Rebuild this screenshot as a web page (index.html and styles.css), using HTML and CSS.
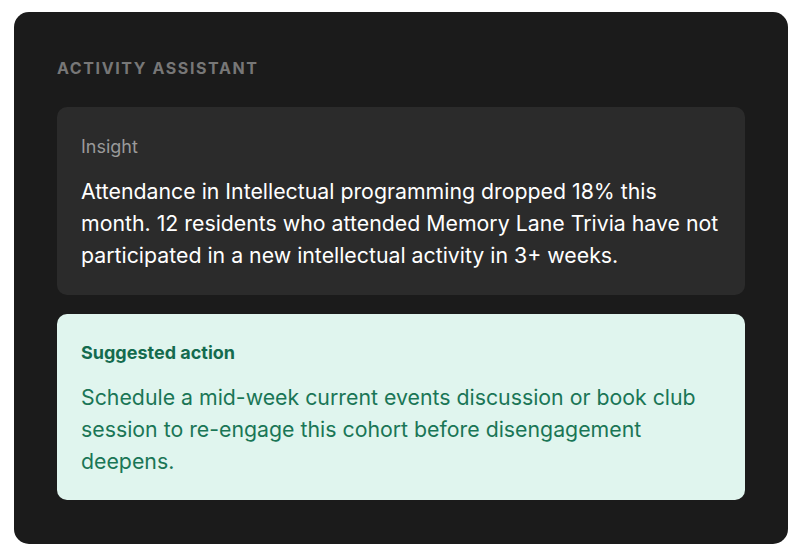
FILE: index.html
```html
<!DOCTYPE html>
<html lang="en">
<head>
<meta charset="utf-8">
<title>Activity Assistant</title>
<link rel="stylesheet" href="styles.css">
</head>
<body>
  <section class="assistant">
    <h2 class="assistant-title">Activity Assistant</h2>
    <div class="panel panel-insight">
      <div class="panel-label">Insight</div>
      <p class="panel-text">Attendance in Intellectual programming dropped 18% this month. 12 residents who attended Memory Lane Trivia have not participated in a new intellectual activity in 3+ weeks.</p>
    </div>
    <div class="panel panel-action">
      <div class="panel-label">Suggested action</div>
      <p class="panel-text">Schedule a mid-week current events discussion or book club session to re-engage this cohort before disengagement deepens.</p>
    </div>
  </section>
</body>
</html>
```

FILE: styles.css
```css
html, body {
  margin: 0;
  padding: 0;
  background: #ffffff;
}

body {
  padding: 12px 12px 0 14px;
  font-family: Inter, "Noto Sans", "Liberation Sans", sans-serif;
}

.assistant {
  box-sizing: border-box;
  width: 774px;
  height: 532px;
  background: #1b1b1b;
  border-radius: 15px;
  padding: 44px 43px;
  display: flex;
  flex-direction: column;
}

.assistant-title {
  margin: 0 0 27px;
  font-size: 16px;
  line-height: 24px;
  font-weight: 700;
  letter-spacing: 0.1em;
  text-transform: uppercase;
  color: #777777;
}

.panel {
  border-radius: 10px;
  padding: 26px 20px 24px 24px;
}

.panel + .panel {
  margin-top: 19px;
}

.panel-insight {
  background: #2b2b2b;
}

.panel-action {
  background: #e0f5ee;
  padding-top: 25px;
  padding-bottom: 23px;
}

.panel-label {
  font-size: 18px;
  line-height: 27px;
}

.panel-insight .panel-label {
  color: #9a9a9a;
}

.panel-action .panel-label {
  font-weight: 700;
  color: #146b4e;
}

.panel-text {
  margin: 15px 0 0;
  font-size: 21.3px;
  line-height: 32px;
}

.panel-insight .panel-text {
  color: #ffffff;
}

.panel-action .panel-text {
  color: #1a7656;
}
```
